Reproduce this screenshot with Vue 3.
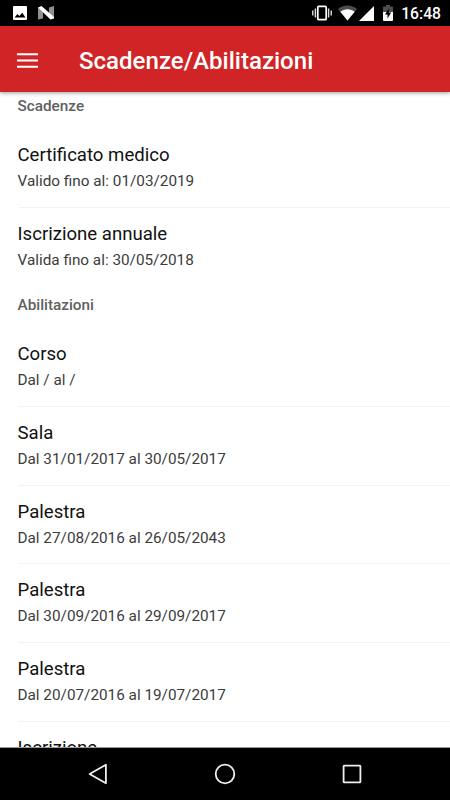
<template>
  <div class="screen">
    <div class="status-bar">
      <div class="status-bar__left">
        <svg width="14" height="14" viewBox="0 0 14 14">
          <path d="M1 0h12a1 1 0 0 1 1 1v12a1 1 0 0 1-1 1H1a1 1 0 0 1-1-1V1a1 1 0 0 1 1-1z" fill="#fff" />
          <path d="M1.600 11.500 4.400 8l1.900 2.100L9.200 6.700l3.300 4.800z" fill="#000" />
        </svg>
        <svg class="status-bar__n" width="16" height="14" viewBox="0 0 16 14">
          <path d="M0 1.500 5 4v8.500L0 13.500zM16 0v12.500l-5-3V1.500z" fill="#909090" />
          <path d="M0 1.500 3.500 0 16 11v1.500L12.500 13.500z" fill="#fff" />
        </svg>
      </div>
      <div class="status-bar__right">
        <svg width="20" height="16" viewBox="0 0 20 16">
          <rect x="5.800" y="1.300" width="8.400" height="13.400" rx="1" fill="none" stroke="#fff" stroke-width="1.700" />
          <path d="M3.400 3.500v9M16.600 3.500v9M.8 5.500v5M19.200 5.500v5" stroke="#ddd" stroke-width="1.400" />
        </svg>
        <svg class="status-bar__wifi" width="19" height="16" viewBox="0 0 19 16">
          <path d="M0 4C5.500-.8 13.500-.8 19 4L9.500 15.500z" fill="#4d4d4d" />
          <path d="M2.300 6.800C6.500 3.400 12.500 3.400 16.700 6.800L9.500 15.500z" fill="#fff" />
        </svg>
        <svg class="status-bar__signal" width="15" height="15" viewBox="0 0 15 15">
          <path d="M15 0v15H0z" fill="#fff" />
        </svg>
        <svg class="status-bar__battery" width="10" height="16" viewBox="0 0 10 16">
          <path d="M3 0h4v1.500h2.300L10 2.200V7H0V2.200l.7-.7H3z" fill="#4d4d4d" />
          <path d="M0 7h10v8.300l-.7.7H.7l-.7-.7z" fill="#fff" />
          <path d="M5.800 3.500 2 9.500h2.500v4l3.700-6H5.800z" fill="#000" />
        </svg>
        <span class="status-bar__time">16:48</span>
      </div>
    </div>

    <header class="toolbar">
      <svg class="toolbar__menu" width="21" height="15" viewBox="0 0 21 15">
        <path d="M0 1.200h21M0 7.500h21M0 13.800h21" stroke="#fff" stroke-width="2.100" />
      </svg>
      <h1 class="toolbar__title">Scadenze/Abilitazioni</h1>
    </header>

    <main class="content">
      <section v-for="group in groups" :key="group.label" class="group">
        <h2 class="group__label">{{ group.label }}</h2>
        <div v-for="(item, i) in group.items" :key="i" class="item">
          <div class="item__title">{{ item.title }}</div>
          <div class="item__text">{{ item.text }}</div>
        </div>
      </section>
    </main>

    <nav class="nav-bar">
      <svg width="22" height="22" viewBox="0 0 22 22">
        <path d="M18.900 1.800v18.400L2.600 11z" />
      </svg>
      <svg width="22" height="22" viewBox="0 0 22 22">
        <circle cx="11" cy="11" r="9.300" />
      </svg>
      <svg width="22" height="22" viewBox="0 0 22 22">
        <rect x="2.600" y="2.600" width="16.800" height="16.800" rx=".6" />
      </svg>
    </nav>
  </div>
</template>

<script setup>
const groups = [
  {
    label: 'Scadenze',
    items: [
      { title: 'Certificato medico', text: 'Valido fino al: 01/03/2019' },
      { title: 'Iscrizione annuale', text: 'Valida fino al: 30/05/2018' }
    ]
  },
  {
    label: 'Abilitazioni',
    items: [
      { title: 'Corso', text: 'Dal / al /' },
      { title: 'Sala', text: 'Dal 31/01/2017 al 30/05/2017' },
      { title: 'Palestra', text: 'Dal 27/08/2016 al 26/05/2043' },
      { title: 'Palestra', text: 'Dal 30/09/2016 al 29/09/2017' },
      { title: 'Palestra', text: 'Dal 20/07/2016 al 19/07/2017' },
      { title: 'Iscrizione', text: '' }
    ]
  }
]
</script>

<style>
body {
  margin: 0;
}
</style>

<style scoped>
.screen {
  display: flex;
  flex-direction: column;
  width: 100%;
  height: 100vh;
  overflow: hidden;
  background: #fff;
  font-family: Roboto, "Liberation Sans", sans-serif;
}

.status-bar {
  flex: none;
  display: flex;
  justify-content: space-between;
  height: 26px;
  box-sizing: border-box;
  padding: 0 9px 0 13px;
  background: #000;
  color: #fff;
}

.status-bar__left,
.status-bar__right {
  display: flex;
  align-items: center;
}

.status-bar__n {
  margin-left: 11px;
}

.status-bar__wifi {
  margin-left: 6px;
}

.status-bar__signal {
  margin-left: 2px;
}

.status-bar__battery {
  margin-left: 9px;
}

.status-bar__time {
  margin: 2px 0 0 8px;
  font-size: 15.700px;
  font-weight: 500;
  line-height: 24px;
}

.toolbar {
  flex: none;
  position: relative;
  z-index: 1;
  display: flex;
  align-items: center;
  height: 66px;
  box-sizing: border-box;
  padding: 2px 17px 0;
  background: #d02426;
  color: #fff;
  box-shadow: 0 1px 4px rgba(0, 0, 0, 0.4);
}

.toolbar__title {
  margin: 2px 0 0 41px;
  font-size: 24.050px;
  font-weight: 500;
  line-height: 32px;
}

/* list is scrolled a few pixels under the toolbar */
.content {
  flex: 1;
  min-height: 0;
  margin-top: -4.500px;
  overflow: hidden;
}

.group__label {
  height: 41.500px;
  margin: 0;
  padding: 8.600px 17.500px 0;
  box-sizing: border-box;
  color: #616161;
  font-size: 15.300px;
  font-weight: 500;
  line-height: 20px;
}

.item {
  height: 78.750px;
  margin-left: 17.500px;
  padding-top: 14px;
  box-sizing: border-box;
  border-bottom: 1px solid #f3f3f3;
}

.item:last-child {
  border-bottom: 0;
}

.item__title {
  color: #111;
  font-size: 18.600px;
  line-height: 24px;
}

.item__text {
  margin-top: 3px;
  color: #3c3c3c;
  font-size: 15.300px;
  line-height: 22px;
}

.nav-bar {
  flex: none;
  position: relative;
  z-index: 1;
  display: flex;
  align-items: center;
  justify-content: space-between;
  height: 53px;
  box-sizing: border-box;
  padding: 0 87px;
  border-top: 1px solid #999;
  background: #000;
}

.nav-bar svg {
  fill: none;
  stroke: #eee;
  stroke-width: 1.800;
  stroke-linejoin: round;
}
</style>
